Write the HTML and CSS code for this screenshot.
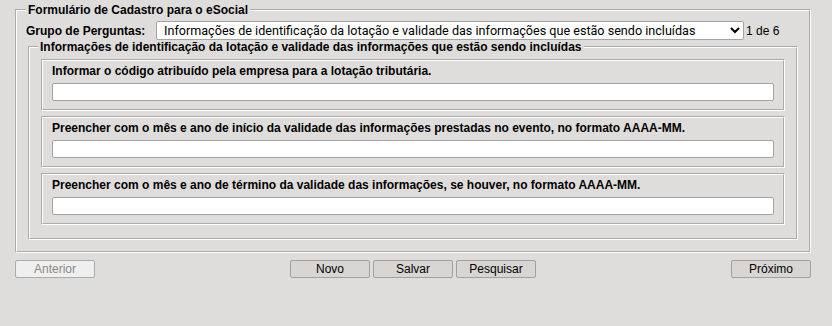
FILE: index.html
```html
<!DOCTYPE html>
<html lang="pt-BR">
<head>
  <meta charset="UTF-8">
  <meta name="viewport" content="width=device-width, initial-scale=1.0">
  <title>Formulário de Cadastro para o eSocial</title>
  <link rel="stylesheet" href="styles.css">
</head>
<body>
  <div class="page">
    <fieldset class="form-frame">
      <legend>Formulário de Cadastro para o eSocial</legend>

      <!-- Question group selector -->
      <div class="group-row">
        <label for="grupo" class="group-label">Grupo de Perguntas:</label>
        <select id="grupo" class="group-select">
          <option>Informações de identificação da lotação e validade das informações que estão sendo incluídas</option>
        </select>
        <span class="group-count">1 de 6</span>
      </div>

      <!-- Questions -->
      <fieldset class="question-group">
        <legend>Informações de identificação da lotação e validade das informações que estão sendo incluídas</legend>

        <div class="question">
          <label for="q1">Informar o código atribuído pela empresa para a lotação tributária.</label>
          <input type="text" id="q1">
        </div>

        <div class="question">
          <label for="q2">Preencher com o mês e ano de início da validade das informações prestadas no evento, no formato AAAA-MM.</label>
          <input type="text" id="q2">
        </div>

        <div class="question">
          <label for="q3">Preencher com o mês e ano de término da validade das informações, se houver, no formato AAAA-MM.</label>
          <input type="text" id="q3">
        </div>
      </fieldset>
    </fieldset>

    <div class="actions">
      <button class="button" disabled>Anterior</button>
      <div class="actions-center">
        <button class="button">Novo</button>
        <button class="button">Salvar</button>
        <button class="button">Pesquisar</button>
      </div>
      <button class="button">Próximo</button>
    </div>
  </div>
</body>
</html>
```

FILE: styles.css
```css
:root {
  --page-bg: #dfdddb;
  --field-border: #a3a3a3;
  --button-bg: #d8d5d2;
}

body {
  font-family: 'Liberation Sans', Arial, sans-serif;
  font-size: 12px;
  background-color: var(--page-bg);
  color: #000;
  margin: 0;
  padding: 0;
}

.page {
  width: 796px;
  margin-left: 15px;
  padding-top: 3px;
}

fieldset {
  border: 2px groove #fff;
  margin: 0;
  min-width: 0;
}

legend {
  font-weight: bold;
  line-height: 14px;
  padding: 0 2px;
}

.form-frame {
  padding: 4px 9px 11px;
}

.group-row {
  display: flex;
  align-items: center;
}

.group-label {
  font-weight: bold;
  width: 130px;
}

.group-select {
  width: 588px;
  height: 19px;
  padding: 0 3px;
  font-family: Roboto, sans-serif;
  font-size: 12.6px;
  color: #000;
  background-color: white;
  border: 1px solid var(--field-border);
  border-radius: 2px;
}

.group-count {
  margin-left: 2px;
}

.question-group {
  margin: 0 2px;
  padding: 5px 11px 13px;
}

.question-group legend {
  margin-left: -3px;
}

.question {
  border: 2px groove #fff;
  padding: 3px 9px 8px;
}

.question + .question {
  margin-top: 5px;
}

.question label {
  display: block;
  font-weight: bold;
  line-height: 14px;
  margin-bottom: 5px;
}

.question input {
  display: block;
  width: 100%;
  height: 18px;
  box-sizing: border-box;
  padding: 0 4px;
  font: inherit;
  background-color: white;
  border: 1px solid var(--field-border);
  border-radius: 2px;
}

.actions {
  display: flex;
  justify-content: space-between;
  margin-top: 7px;
}

.actions-center {
  display: flex;
  gap: 3px;
}

.button {
  width: 80px;
  height: 18px;
  padding: 0;
  font-family: 'Liberation Sans', Arial, sans-serif;
  font-size: 12px;
  color: #000;
  background-color: var(--button-bg);
  border: 1px solid #a0a0a0;
  border-radius: 2px;
}

.button:disabled {
  background-color: #efefef;
  color: #8a8a8a;
  border-color: #ababab;
}
```
